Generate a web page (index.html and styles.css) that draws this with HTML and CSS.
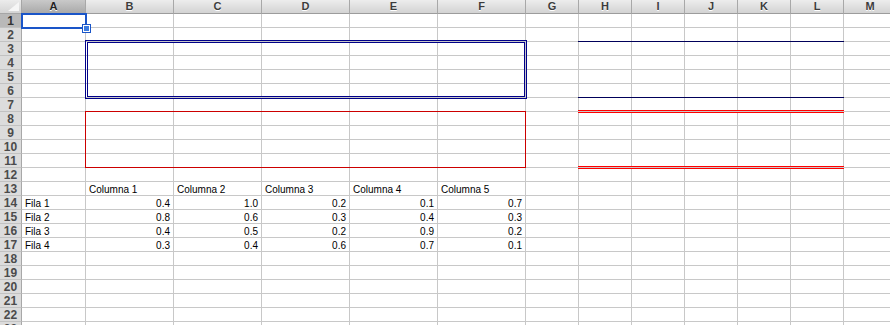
FILE: index.html
```html
<!DOCTYPE html>
<html lang="es">
<head>
    <meta charset="UTF-8">
    <title>Hoja 1</title>
    <link rel="stylesheet" href="styles.css">
</head>
<body>
    <div class="sheet" id="sheet">
        <div class="grid" id="grid"></div>

        <!-- bordes de celdas -->
        <div class="box-double"></div>
        <div class="box-red"></div>
        <div class="line-navy top3"></div>
        <div class="line-navy top7"></div>
        <div class="line-red top8"></div>
        <div class="line-red top12"></div>

        <div class="selection"><span class="handle"></span></div>
    </div>

    <script>
        const cols = ['A','B','C','D','E','F','G','H','I','J','K','L','M'];
        const datos = {
            13: ['', 'Columna 1', 'Columna 2', 'Columna 3', 'Columna 4', 'Columna 5'],
            14: ['Fila 1', '0.4', '1.0', '0.2', '0.1', '0.7'],
            15: ['Fila 2', '0.8', '0.6', '0.3', '0.4', '0.3'],
            16: ['Fila 3', '0.4', '0.5', '0.2', '0.9', '0.2'],
            17: ['Fila 4', '0.3', '0.4', '0.6', '0.7', '0.1']
        };
        const grid = document.getElementById('grid');

        function celda(cls, texto) {
            const d = document.createElement('div');
            d.className = cls;
            if (texto) d.textContent = texto;
            grid.appendChild(d);
        }

        celda('corner');
        cols.forEach(c => celda(c === 'A' ? 'col-head active' : 'col-head', c));

        for (let r = 1; r <= 23; r++) {
            celda(r === 1 ? 'row-head active' : 'row-head', String(r));
            cols.forEach((c, i) => {
                const fila = datos[r];
                let texto = fila && fila[i] ? fila[i] : '';
                let cls = 'cell';
                if (texto && r > 13 && i > 0) cls += ' num';
                celda(cls, texto);
            });
        }
    </script>
</body>
</html>
```

FILE: styles.css
```css
body {
    margin: 0;
    padding: 0;
    background: #fff;
    font-family: "Liberation Sans", Arial, sans-serif;
    overflow: hidden;
}

.sheet {
    position: relative;
    width: 890px;
    height: 325px;
    overflow: hidden;
}

.grid {
    display: grid;
    grid-template-columns: 22px 64px repeat(5, 88px) repeat(7, 53px);
    grid-template-rows: 14px repeat(23, 14px);
    width: 920px;
}

.grid > div {
    box-sizing: border-box;
}

.corner {
    background: linear-gradient(#ececec, #d4d4d4);
    border-right: 1px solid #a6a6a6;
    border-bottom: 1px solid #a6a6a6;
    position: relative;
}

.corner::after {
    content: "";
    position: absolute;
    right: 2px;
    bottom: 2px;
    border-left: 11px solid transparent;
    border-bottom: 9px solid #f6f6f6;
}

.col-head {
    background: linear-gradient(#ededed, #d3d3d3);
    border-right: 1px solid #a8a8a8;
    border-bottom: 1px solid #9c9c9c;
    font-size: 11px;
    font-weight: bold;
    color: #3c3c3c;
    text-align: center;
    line-height: 13px;
    text-shadow: 0 1px 0 #fff;
}

.col-head.active {
    background: linear-gradient(#c9c9c9, #a9a9a9);
    color: #222;
}

.row-head {
    background: #dcdcdc;
    border-right: 1px solid #a8a8a8;
    border-bottom: 1px solid #c2c2c2;
    font-size: 12px;
    font-weight: bold;
    color: #4b4b4b;
    text-align: center;
    line-height: 14px;
}

.row-head.active {
    background: #b9b9b9;
    color: #333;
}

.cell {
    border-right: 1px solid #c8c8c8;
    border-bottom: 1px solid #c8c8c8;
    font-size: 10px;
    color: #000;
    line-height: 13px;
    padding: 1px 3px 0 3px;
    white-space: nowrap;
}

.cell.num {
    text-align: right;
}

.box-double {
    position: absolute;
    left: 85px;
    top: 40px;
    width: 442px;
    height: 59px;
    box-sizing: border-box;
    border: 3px double #000088;
}

.box-red {
    position: absolute;
    left: 85px;
    top: 111px;
    width: 441px;
    height: 57px;
    box-sizing: border-box;
    border: 1px solid #cc0000;
}

.line-navy {
    position: absolute;
    left: 578px;
    width: 266px;
    height: 1px;
    background: #00005a;
}

.line-navy.top3 { top: 41px; }
.line-navy.top7 { top: 97px; }

.line-red {
    position: absolute;
    left: 578px;
    width: 266px;
    height: 3px;
    box-sizing: border-box;
    border-top: 1px solid #ff0000;
    border-bottom: 1px solid #ff0000;
}

.line-red.top8 { top: 110px; }
.line-red.top12 { top: 166px; }

.selection {
    position: absolute;
    left: 21px;
    top: 13px;
    width: 66px;
    height: 16px;
    box-sizing: border-box;
    border: 2px solid #1a55c8;
}

.handle {
    position: absolute;
    right: -5px;
    bottom: -5px;
    width: 5px;
    height: 5px;
    background: #3b7be0;
    border: 1px solid #fff;
    outline: 1px solid #1a55c8;
}
```
